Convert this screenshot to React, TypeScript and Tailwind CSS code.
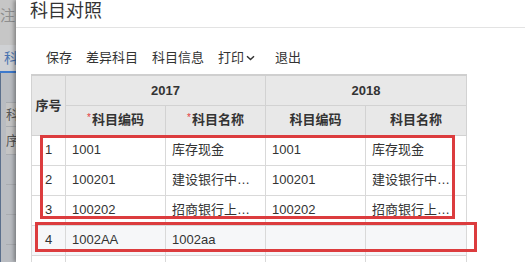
import React from 'react';

const rows = [
  { no: 1, code: '1001', name: '库存现金', code2: '1001', name2: '库存现金' },
  { no: 2, code: '100201', name: '建设银行中山路支行', code2: '100201', name2: '建设银行中山路支行' },
  { no: 3, code: '100202', name: '招商银行上海分行', code2: '100202', name2: '招商银行上海分行' },
  { no: 4, code: '1002AA', name: '1002aa', code2: '', name2: '' },
];

const font = { fontFamily: '"Liberation Sans", "Noto Sans CJK SC", sans-serif' };

function Backdrop() {
  // the page behind the dialog, under a grey mask
  return (
    <div className="w-[16px] shrink-0 h-[262px] overflow-hidden flex flex-col bg-[#b9bcc1]">
      <div className="h-[45px] bg-[#c6c6c6] pt-[8px] text-[15px] text-[#8e8e8e] whitespace-nowrap leading-none">注公</div>
      <div className="h-[26px] bg-[#cfd1d4] pt-[6px] pl-[4px] text-[14px] text-[#4a74b0] leading-none">科</div>
      <div className="h-[2px] bg-[#3d79cc]" />
      <div className="flex-1 flex">
        <div className="w-[3px] border-r border-[#5b6f8c] bg-[#b5b9bf]" />
        <div className="flex-1 flex flex-col pl-[5px]">
          <div className="h-[30px] border-b border-[#a9acb0]" />
          <div className="h-[24px] bg-[#c4c4c4] border-b border-[#a9acb0] text-[13px] text-[#555] leading-[24px]">科</div>
          <div className="h-[28px] bg-[#c4c4c4] border-b border-[#a9acb0] text-[13px] text-[#555] leading-[28px]">序</div>
          <div className="h-[30px] border-b border-[#a9acb0]" />
          <div className="h-[30px] border-b border-[#a9acb0]" />
          <div className="h-[30px] border-b border-[#a9acb0]" />
        </div>
      </div>
    </div>
  );
}

function Req({ children }: { children: React.ReactNode }) {
  return (
    <span>
      <span className="text-[#e4393c] text-[10px] relative -top-[3px] mr-[1px] font-normal">*</span>
      {children}
    </span>
  );
}

export default function App() {
  const th = 'border border-[#d2d2d2] bg-[#e8e8e8] font-bold text-[13px] text-[#333] h-[30px] p-0';
  const td = 'border border-[#d9d9d9] h-[30px] px-[6px] text-[13px] text-[#333] truncate';
  return (
    <div className="w-[525px] h-[262px] overflow-hidden flex bg-white" style={font}>
      <Backdrop />
      <div className="flex-1 bg-white shadow-[-2px_0_4px_rgba(0,0,0,0.35)] relative">
        <div className="h-[28px] border-b border-[#e3e3e3] flex items-center pl-[14px] pb-[5px]">
          <span className="text-[18px] text-[#333] leading-none">科目对照</span>
        </div>
        <div className="h-[20px] mt-[20px] flex items-center pl-[30px] gap-[14px] text-[13px] text-[#333]">
          <span>保存</span>
          <span>差异科目</span>
          <span>科目信息</span>
          <span className="flex items-center">
            打印
            <svg width="9" height="6" viewBox="0 0 9 6" className="ml-[2px] mr-[6px]">
              <path d="M1 1.2 L4.5 4.5 L8 1.2" fill="none" stroke="#333" strokeWidth="1.5" />
            </svg>
          </span>
          <span>退出</span>
        </div>
        <div className="mt-[6px] ml-[15px] relative w-[435px]">
          <table className="table-fixed border-collapse w-[435px] border-t-2 border-t-[#cfcfcf]">
            <colgroup>
              <col className="w-[34px]" />
              <col className="w-[100px]" />
              <col className="w-[100px]" />
              <col className="w-[100px]" />
              <col className="w-[101px]" />
            </colgroup>
            <thead>
              <tr>
                <th rowSpan={2} className={th}>序号</th>
                <th colSpan={2} className={th}>2017</th>
                <th colSpan={2} className={th}>2018</th>
              </tr>
              <tr>
                <th className={th}><Req>科目编码</Req></th>
                <th className={th}><Req>科目名称</Req></th>
                <th className={th}>科目编码</th>
                <th className={th}>科目名称</th>
              </tr>
            </thead>
            <tbody>
              {rows.map((r) => (
                <tr key={r.no} className={r.no === 4 ? 'bg-[#f6f7f9]' : 'bg-white'}>
                  <td className={`${td} text-center`}>{r.no}</td>
                  <td className={td}>{r.code}</td>
                  <td className={td}>{r.name}</td>
                  <td className={td}>{r.code2}</td>
                  <td className={td}>{r.name2}</td>
                </tr>
              ))}
              <tr>
                <td className={td} />
                <td className={td} />
                <td className={td} />
                <td className={td} />
                <td className={td} />
              </tr>
            </tbody>
          </table>
          {/* red annotation boxes */}
          <div className="absolute left-[9px] top-[61px] w-[415px] h-[84px] border-[3px] border-[#dc3c3e] pointer-events-none" />
          <div className="absolute left-[4px] top-[148px] w-[442px] h-[30px] border-[3px] border-[#dc3c3e] pointer-events-none" />
        </div>
      </div>
    </div>
  );
}
